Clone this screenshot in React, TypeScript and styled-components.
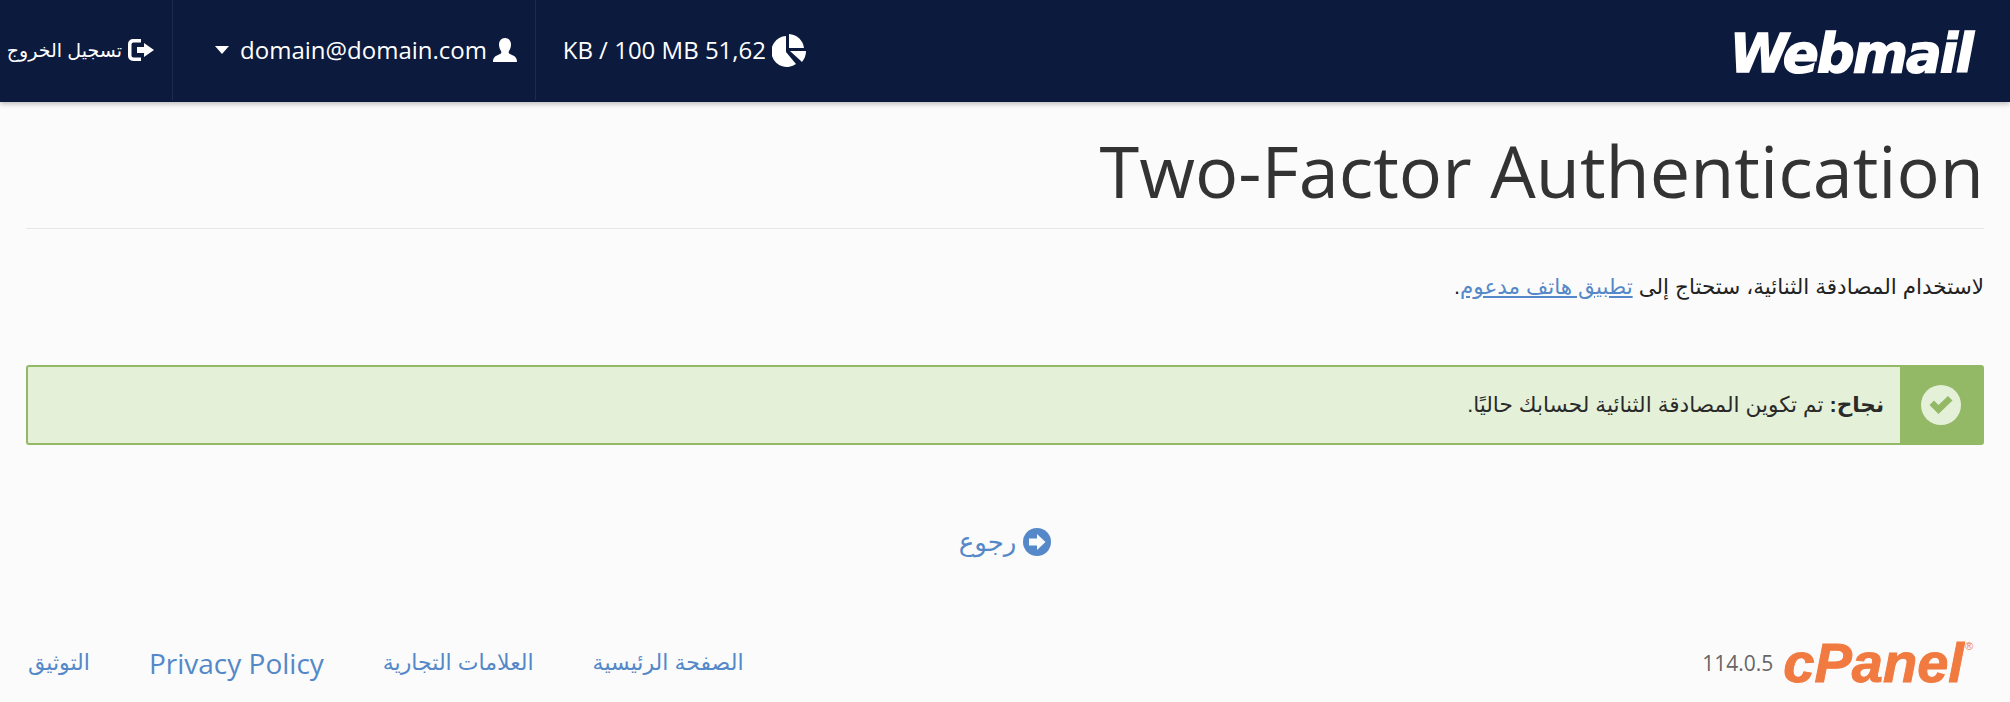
import React from "react";
import styled, { createGlobalStyle } from "styled-components";

const Global = createGlobalStyle`
  html, body { margin: 0; padding: 0; background: #fbfbfb; }
  body { font-family: "Liberation Sans", "DejaVu Sans", sans-serif; color: #333; }
`;
const Page = styled.div`
  width: 2010px; height: 702px; overflow: hidden; display: flex; flex-direction: column;
`;
const Header = styled.header`
  height: 102px; flex: none; background: #0c1a3e; display: flex; align-items: stretch;
  box-shadow: 0 2px 5px rgba(0,0,0,.25); color: #fff; position: relative;
`;
const Logo = styled.div`
  margin: 4px 38px 0 0; align-self: center; font: italic 700 53px/1 "DejaVu Sans", sans-serif;
  color: #fff; -webkit-text-stroke: 1.5px #fff; direction: ltr; letter-spacing: -2px;
`;
const HeaderNav = styled.nav`
  margin-right: auto; display: flex; align-items: stretch; height: 100px;
`;
const NavItem = styled.div<{ $w: number; $border?: boolean }>`
  width: ${p => p.$w}px; box-sizing: border-box; display: flex; align-items: center; gap: 6px;
  font: 24px/1 "Open Sans", "DejaVu Sans", sans-serif;
  padding-right: 18px;
  ${p => p.$border ? "border-left: 1px solid #1c2b52;" : ""}
`;
const Caret = styled.span`
  width: 0; height: 0; border: 7.5px solid transparent; border-top: 8px solid #fff; border-bottom: 0; margin-right: 5px;
`;
const Small = styled.span`
  font: 19px/1 "Liberation Sans", "DejaVu Sans", sans-serif;
`;
const Main = styled.main`
  padding: 0 26px; flex: 1; display: flex; flex-direction: column;
`;
const Title = styled.h1`
  margin: 20px 0 0; padding: 0 0 10px; border-bottom: 1px solid #e6e6e6; direction: ltr; text-align: right;
  font: 400 72px/96px "Open Sans", sans-serif; color: #333;
`;
const Intro = styled.p`
  margin: 46px 0 0; font-size: 21.5px; line-height: 24px; color: #222;
`;
const Link = styled.a`
  color: #5488c8; text-decoration: underline;
`;
const Alert = styled.div`
  margin-top: 66px; height: 80px; box-sizing: border-box; display: flex; border: 2px solid #93b866; border-radius: 3px; background: #e4f1d8;
`;
const AlertIcon = styled.div`
  width: 82px; flex: none; background: #93b866; display: flex; align-items: center; justify-content: center;
`;
const AlertText = styled.div`
  padding-right: 16px; align-self: center; font-size: 21.6px; color: #2a2a2a;
`;
const Back = styled.a`
  margin-top: 82px; align-self: center; display: flex; align-items: center; gap: 7px; color: #5488c8; font-size: 26px; line-height: 30px;
`;
const Footer = styled.footer`
  margin-top: auto; height: 78px; display: flex; align-items: center; justify-content: space-between;
`;
const FooterNav = styled.div`
  display: flex; gap: 59px; align-items: center; padding-left: 2px; color: #5488c8; font-size: 22px;
`;
const En = styled.span`
  font: 28px/1 "Open Sans", sans-serif;
`;
const Brand = styled.div`
  display: flex; align-items: center; gap: 10px; direction: ltr; margin-right: 11px;
`;
const Version = styled.span`
  font: 21px/1 "Open Sans", sans-serif; color: #666;
`;
const CPanel = styled.span`
  font: italic 700 56px/1 "Liberation Sans", sans-serif; color: #f07a40; -webkit-text-stroke: 1px #f07a40;
`;
const Reg = styled.sup`
  font: 11px/1 "Liberation Sans", sans-serif; color: #f07a40; align-self: flex-start; margin: 6px 0 0 -9px;
`;

const Pie = () => (
  <svg width="34" height="33" viewBox="0 0 34 33" fill="#fff">
    <path d="M14 2v16l10 12A15.500 15.500 0 1 1 14 2z" />
    <path d="M17 0a16 16 0 0 1 15 14H17z" />
    <path d="M18 17h16a17 17 0 0 1-4 11z" />
  </svg>
);
const User = () => (
  <svg width="24" height="24" viewBox="0 0 24 24" fill="#fff">
    <path d="M12 0c4 0 6 3 6 6.500 0 3-1 5-2 6.500-1 2 0 3 3 4 3 1 5 3 5 7H0c0-4 2-6 5-7 3-1 4-2 3-4-1-1.500-2-3.500-2-6.500C6 3 8 0 12 0z" />
  </svg>
);
const LogOut = () => (
  <svg width="26" height="22" viewBox="0 0 26 22" fill="#fff">
    <path d="M5 0h8v3.500H5.500a2 2 0 0 0-2 2v11a2 2 0 0 0 2 2H13V22H5a5 5 0 0 1-5-5V5a5 5 0 0 1 5-5z" />
    <path d="M9 8h7V4l10 7-10 7v-4H9z" />
  </svg>
);
const Check = () => (
  <svg width="40" height="40" viewBox="0 0 40 40">
    <circle cx="20" cy="20" r="20" fill="#e4f1d8" />
    <path d="M8.500 20L13 15.500l4.500 4.500 9.500-9 4.500 4.500L17.500 29z" fill="#93b866" />
  </svg>
);
const BackIcon = () => (
  <svg width="28" height="28" viewBox="0 0 28 28">
    <circle cx="14" cy="14" r="14" fill="#5488c8" />
    <path d="M6 10.500h8V6l8.500 8-8.500 8v-4.500H6z" fill="#fbfbfb" />
  </svg>
);

export default function App() {
  return (
    <Page dir="rtl">
      <Global />
      <Header>
        <Logo>Webmail</Logo>
        <HeaderNav>
          <NavItem $w={289} $border>
            <Pie /><span>51,62 KB / 100 MB</span>
          </NavItem>
          <NavItem $w={363} $border>
            <User /><span>domain@domain.com</span><Caret />
          </NavItem>
          <NavItem $w={172}>
            <LogOut /><Small>تسجيل الخروج</Small>
          </NavItem>
        </HeaderNav>
      </Header>
      <Main>
        <Title>Two-Factor Authentication</Title>
        <Intro>لاستخدام المصادقة الثنائية، ستحتاج إلى <Link>تطبيق هاتف مدعوم</Link>.</Intro>
        <Alert>
          <AlertIcon><Check /></AlertIcon>
          <AlertText><b>نجاح:</b> تم تكوين المصادقة الثنائية لحسابك حاليًا.</AlertText>
        </Alert>
        <Back><BackIcon />رجوع</Back>
        <Footer>
          <Brand><Version>114.0.5</Version><CPanel>cPanel</CPanel><Reg>®</Reg></Brand>
          <FooterNav>
            <span>الصفحة الرئيسية</span>
            <span>العلامات التجارية</span>
            <En>Privacy Policy</En>
            <span>التوثيق</span>
          </FooterNav>
        </Footer>
      </Main>
    </Page>
  );
}
